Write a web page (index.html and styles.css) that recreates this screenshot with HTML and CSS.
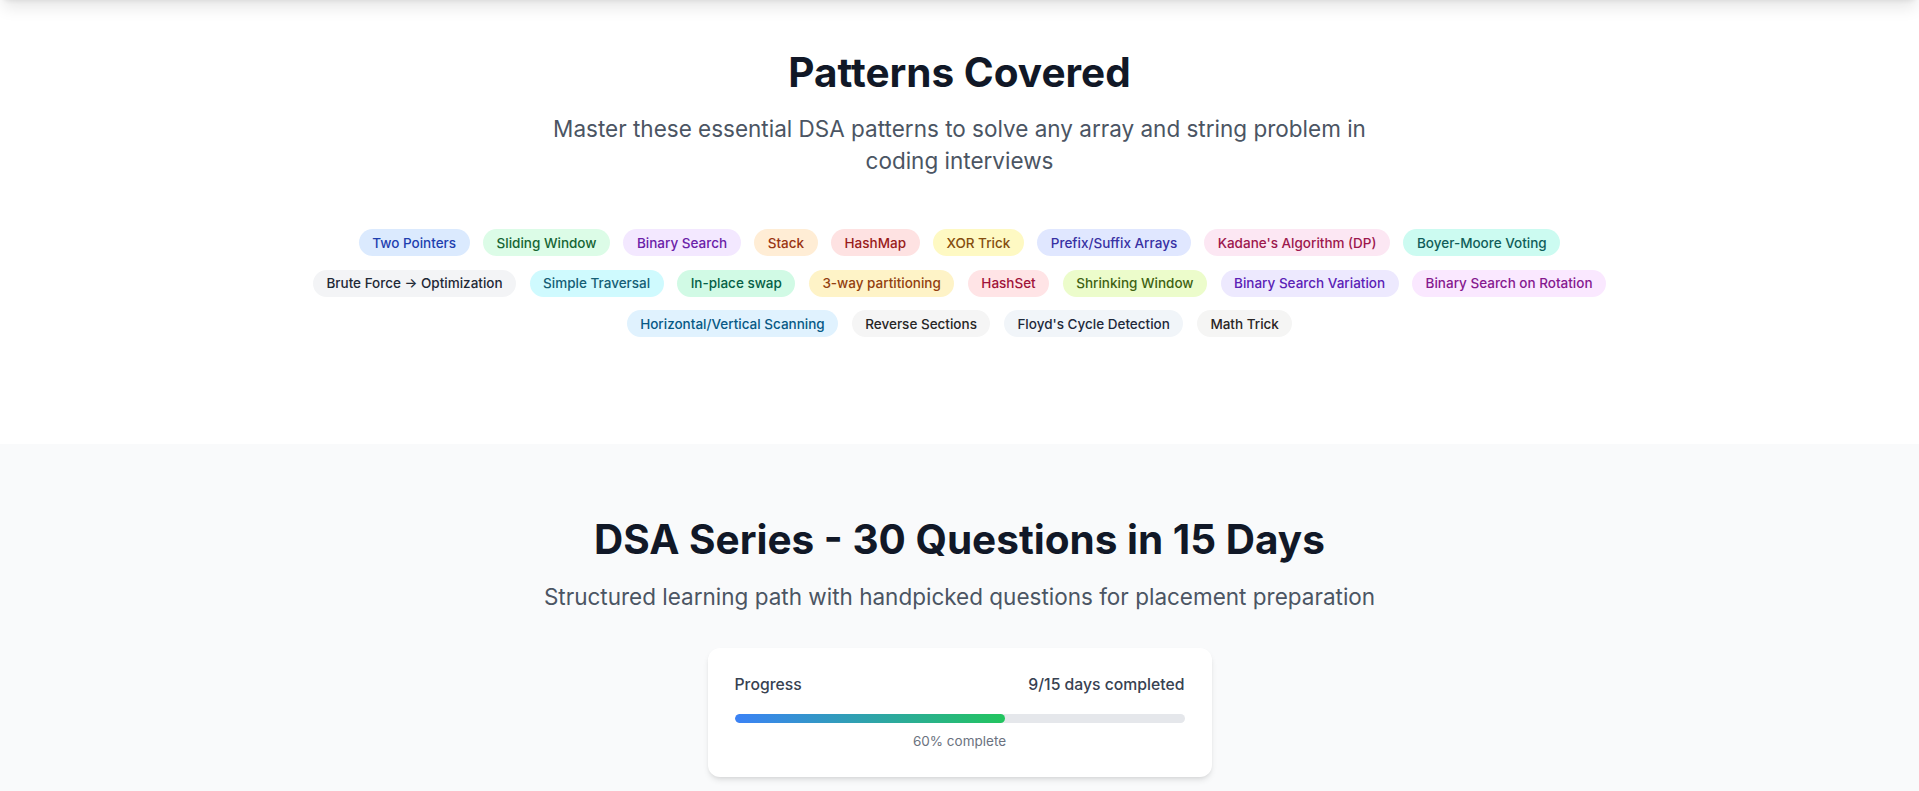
FILE: index.html
```html
<!DOCTYPE html>
<html lang="en">
<head>
<meta charset="utf-8">
<title>DSA Patterns</title>
<link rel="stylesheet" href="styles.css">
</head>
<body>
<div class="topbar"></div>
<section class="patterns">
  <h2 class="title">Patterns Covered</h2>
  <p class="subtitle wide">Master these essential DSA patterns to solve any array and string problem in coding interviews</p>
  <div class="badges">
    <span class="badge blue">Two Pointers</span>
    <span class="badge green">Sliding Window</span>
    <span class="badge purple">Binary Search</span>
    <span class="badge orange">Stack</span>
    <span class="badge red">HashMap</span>
    <span class="badge yellow">XOR Trick</span>
    <span class="badge indigo">Prefix/Suffix Arrays</span>
    <span class="badge pink">Kadane's Algorithm (DP)</span>
    <span class="badge teal">Boyer-Moore Voting</span>
    <span class="badge gray">Brute Force → Optimization</span>
    <span class="badge cyan">Simple Traversal</span>
    <span class="badge emerald">In-place swap</span>
    <span class="badge amber">3-way partitioning</span>
    <span class="badge rose">HashSet</span>
    <span class="badge lime">Shrinking Window</span>
    <span class="badge violet">Binary Search Variation</span>
    <span class="badge fuchsia">Binary Search on Rotation</span>
    <span class="badge sky">Horizontal/Vertical Scanning</span>
    <span class="badge neutral">Reverse Sections</span>
    <span class="badge slate">Floyd's Cycle Detection</span>
    <span class="badge stone">Math Trick</span>
  </div>
</section>
<section class="series">
  <h2 class="title">DSA Series - 30 Questions in 15 Days</h2>
  <p class="subtitle">Structured learning path with handpicked questions for placement preparation</p>
  <div class="card">
    <div class="card-row">
      <span>Progress</span>
      <span>9/15 days completed</span>
    </div>
    <div class="track"><div class="fill" style="width:60%"></div></div>
    <div class="pct">60% complete</div>
  </div>
</section>
</body>
</html>
```
FILE: styles.css
```css
* { box-sizing: border-box; }
html, body { margin: 0; padding: 0; }
body {
  font-family: Inter, "Noto Sans", "Liberation Sans", sans-serif;
  background: #ffffff;
  color: #111827;
  overflow: hidden;
}
.topbar {
  position: fixed;
  top: -70px;
  left: 0;
  right: 0;
  height: 70px;
  background: #ffffff;
  box-shadow: 0 10px 15px -3px rgba(0,0,0,0.1), 0 4px 6px -4px rgba(0,0,0,0.1);
  z-index: 10;
}
.title {
  margin: 0;
  font-size: 40.5px;
  line-height: 45px;
  font-weight: 700;
  color: #111827;
  text-align: center;
}
.subtitle {
  margin: 18px auto 0;
  font-size: 22.5px;
  line-height: 31.5px;
  color: #4b5563;
  text-align: center;
}
.subtitle.wide { max-width: 864px; }
.patterns {
  padding: 50px 18px 107px;
}
.badges {
  max-width: 1404px;
  margin: 53px auto 0;
  display: flex;
  flex-wrap: wrap;
  justify-content: center;
  gap: 13.5px;
}
.badge {
  display: inline-block;
  padding: 4.5px 13.5px;
  border-radius: 999px;
  font-size: 13.5px;
  line-height: 18px;
  font-weight: 500;
}
.blue { background: #dbeafe; color: #1e40af; }
.green { background: #dcfce7; color: #166534; }
.purple { background: #f3e8ff; color: #6b21a8; }
.orange { background: #ffedd5; color: #9a3412; }
.red { background: #fee2e2; color: #991b1b; }
.yellow { background: #fef9c3; color: #854d0e; }
.indigo { background: #e0e7ff; color: #3730a3; }
.pink { background: #fce7f3; color: #9d174d; }
.teal { background: #ccfbf1; color: #115e59; }
.gray { background: #f3f4f6; color: #1f2937; }
.cyan { background: #cffafe; color: #155e75; }
.emerald { background: #d1fae5; color: #065f46; }
.amber { background: #fef3c7; color: #92400e; }
.rose { background: #ffe4e6; color: #9f1239; }
.lime { background: #ecfccb; color: #3f6212; }
.violet { background: #ede9fe; color: #5b21b6; }
.fuchsia { background: #fae8ff; color: #86198f; }
.sky { background: #e0f2fe; color: #075985; }
.neutral { background: #f5f5f5; color: #262626; }
.slate { background: #f1f5f9; color: #1e293b; }
.stone { background: #f5f5f4; color: #292524; }

.series {
  background: #f9fafb;
  padding: 73px 18px 80px;
}
.series .subtitle { margin-top: 18.5px; }
.card {
  width: 504px;
  margin: 35.5px auto 0;
  background: #ffffff;
  border-radius: 12px;
  padding: 26px 27px 27px;
  box-shadow: 0 4px 6px -1px rgba(0,0,0,0.1), 0 2px 4px -2px rgba(0,0,0,0.1);
}
.card-row {
  display: flex;
  justify-content: space-between;
  font-size: 15.75px;
  line-height: 22.5px;
  font-weight: 500;
  color: #374151;
}
.track {
  margin-top: 18px;
  height: 9px;
  background: #e5e7eb;
  border-radius: 999px;
  overflow: hidden;
}
.fill {
  height: 100%;
  border-radius: 999px;
  background: linear-gradient(to right, #3b82f6, #22c55e);
}
.pct {
  margin-top: 9px;
  font-size: 13.5px;
  line-height: 18px;
  color: #6b7280;
  text-align: center;
}
```
